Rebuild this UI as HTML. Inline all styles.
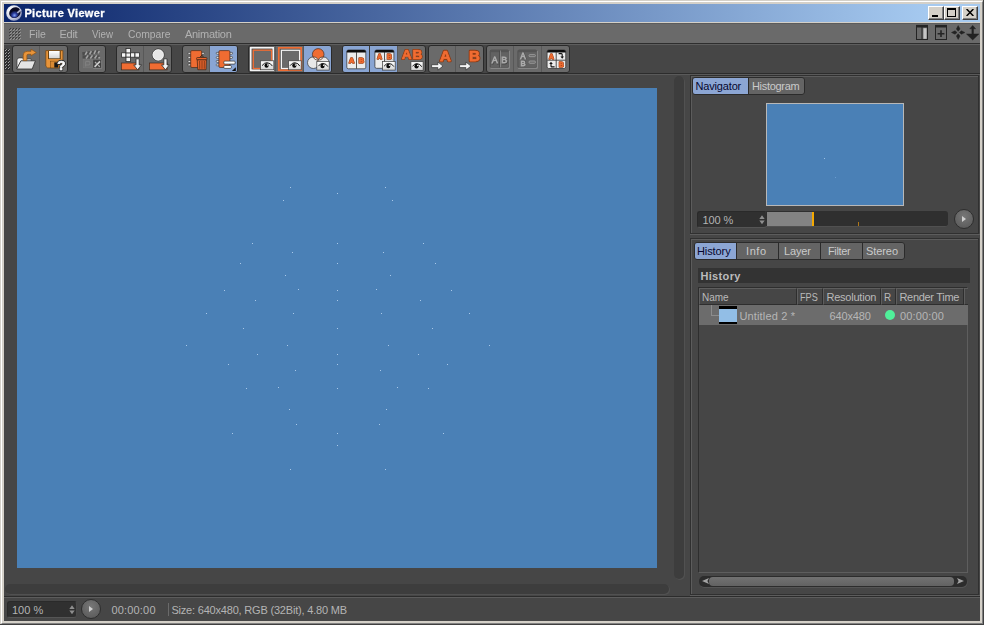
<!DOCTYPE html>
<html>
<head>
<meta charset="utf-8">
<title>Picture Viewer</title>
<style>
html,body{margin:0;padding:0;background:#464646;}
body{width:984px;height:625px;overflow:hidden;position:relative;font-family:"Liberation Sans",sans-serif;font-size:11px;color:#b4b4b4;}
*{box-sizing:border-box;}
.a{position:absolute;}
.t{position:absolute;line-height:14px;white-space:nowrap;font-size:11px;}
#frame{left:0;top:0;width:984px;height:625px;background:#d4d0c8;}
#frame .hl{left:1px;top:1px;width:982px;height:623px;border-left:1px solid #fff;border-top:1px solid #fff;border-right:1px solid #808080;border-bottom:1px solid #808080;}
#frame .dk{left:0;top:0;width:984px;height:625px;border-right:1px solid #404040;border-bottom:1px solid #404040;}
#title{left:4px;top:4px;width:976px;height:18px;background:linear-gradient(to right,#0a246a 0,#a6caf0 95%);}
#title .txt{left:20px;top:2px;font-weight:bold;color:#fff;font-size:11px;line-height:14px;white-space:nowrap;}
.wb{top:2px;width:16px;height:14px;background:#d4d0c8;border-left:1px solid #fff;border-top:1px solid #fff;border-right:1px solid #404040;border-bottom:1px solid #404040;}
.wb:after{content:"";position:absolute;left:0;top:0;right:0;bottom:0;border-right:1px solid #808080;border-bottom:1px solid #808080;}
#menubar{left:4px;top:23px;width:976px;height:20px;background:#6a6a6a;border-top:1px solid #5c5c5c;}
#menubar span{position:absolute;top:3px;line-height:14px;color:#b0b0b0;white-space:nowrap;}
#client{left:4px;top:43px;width:976px;height:578px;background:#464646;}
.grp{top:45px;height:28px;background:#6a6a6a;border:1px solid #2a2a2a;border-radius:3px;}
.on{background:#89a5d3;}
.dv{background:#585858;}
.tabs{background:#2b2b2b;border-radius:4px;}
.tb{height:16px;background:#646464;}
.tb.on{background:#8ca6d4;}
.field{background:#303030;border-radius:3px;border:1px solid #2a2a2a;border-bottom-color:#555;border-right-color:#4a4a4a;color:#b4b4b4;line-height:15px;padding-left:5px;}
.hc{top:288px;height:17px;border-top:1px solid #5e5e5e;border-left:1px solid #5e5e5e;border-right:1px solid #2e2e2e;border-bottom:1px solid #2e2e2e;background:#464646;color:#b8b8b8;line-height:15px;padding-left:3px;white-space:nowrap;overflow:hidden;}
.rbtn{width:20px;height:20px;border-radius:10px;background:radial-gradient(circle at 50% 35%,#777 0%,#636363 60%,#555 100%);border:1px solid #2e2e2e;}
.rbtn:after{content:"";position:absolute;left:7px;top:5.5px;border-left:4px solid #d0d0d0;border-top:3.5px solid transparent;border-bottom:3.5px solid transparent;}
</style>
</head>
<body>
<svg width="0" height="0" style="position:absolute"><defs><linearGradient id="eyeg" x1="0" y1="0" x2="0" y2="1"><stop offset="0" stop-color="#ffffff"/><stop offset="1" stop-color="#d4d4d4"/></linearGradient></defs></svg>
<div class="a" id="frame"><div class="a hl"></div><div class="a dk"></div></div>

<!-- TITLE BAR -->
<div class="a" id="title">
  <svg class="a" style="left:1px;top:0px" width="18" height="18" viewBox="0 0 18 18">
    <defs>
      <radialGradient id="lg1" cx="0.3" cy="0.3" r="0.9"><stop offset="0" stop-color="#ffffff"/><stop offset="0.55" stop-color="#d4d8e8"/><stop offset="1" stop-color="#7078a8"/></radialGradient>
      <radialGradient id="lg2" cx="0.38" cy="0.68" r="0.55"><stop offset="0" stop-color="#86a4f4"/><stop offset="0.45" stop-color="#2c3ea0"/><stop offset="1" stop-color="#080820"/></radialGradient>
    </defs>
    <circle cx="9" cy="9" r="7.8" fill="url(#lg1)"/>
    <ellipse cx="9.9" cy="8.7" rx="5.9" ry="5.2" transform="rotate(-32 9.9 8.7)" fill="#0a0a26"/>
    <ellipse cx="9.6" cy="9.4" rx="4.7" ry="4.3" transform="rotate(-32 9.6 9.4)" fill="url(#lg2)"/>
    <path d="M15.8 4.6 L11.6 8.6 L13 9.6 L16.6 6.4 Z" fill="#c4c8e0" opacity="0.85"/>
  </svg>
  
  <div class="a wb" style="left:924px"><div class="a" style="left:3px;top:8px;width:6px;height:2px;background:#000"></div></div>
  <div class="a wb" style="left:940px"><div class="a" style="left:2px;top:1px;width:9px;height:9px;border:1px solid #000;border-top-width:2px"></div></div>
  <div class="a wb" style="left:958px">
    <svg class="a" style="left:3px;top:2px" width="8" height="7" viewBox="0 0 8 7"><path d="M0.6 0 L7.4 7 M7.4 0 L0.6 7" stroke="#000" stroke-width="1.5" fill="none"/></svg>
  </div>
</div>

<!-- MENU BAR -->
<div class="a" id="menubar">
  <svg class="a" style="left:5px;top:4px" width="12" height="12" viewBox="0 0 12 12" shape-rendering="crispEdges"><rect x="1" y="0" width="1" height="1" fill="#3e3e3e"/><rect x="0" y="1" width="1" height="1" fill="#3e3e3e"/><rect x="2" y="1" width="1" height="1" fill="#949494"/><rect x="1" y="2" width="1" height="1" fill="#949494"/><rect x="4" y="0" width="1" height="1" fill="#3e3e3e"/><rect x="3" y="1" width="1" height="1" fill="#3e3e3e"/><rect x="5" y="1" width="1" height="1" fill="#949494"/><rect x="4" y="2" width="1" height="1" fill="#949494"/><rect x="7" y="0" width="1" height="1" fill="#3e3e3e"/><rect x="6" y="1" width="1" height="1" fill="#3e3e3e"/><rect x="8" y="1" width="1" height="1" fill="#949494"/><rect x="7" y="2" width="1" height="1" fill="#949494"/><rect x="10" y="0" width="1" height="1" fill="#3e3e3e"/><rect x="9" y="1" width="1" height="1" fill="#3e3e3e"/><rect x="11" y="1" width="1" height="1" fill="#949494"/><rect x="10" y="2" width="1" height="1" fill="#949494"/><rect x="1" y="3" width="1" height="1" fill="#3e3e3e"/><rect x="0" y="4" width="1" height="1" fill="#3e3e3e"/><rect x="2" y="4" width="1" height="1" fill="#949494"/><rect x="1" y="5" width="1" height="1" fill="#949494"/><rect x="4" y="3" width="1" height="1" fill="#3e3e3e"/><rect x="3" y="4" width="1" height="1" fill="#3e3e3e"/><rect x="5" y="4" width="1" height="1" fill="#949494"/><rect x="4" y="5" width="1" height="1" fill="#949494"/><rect x="7" y="3" width="1" height="1" fill="#3e3e3e"/><rect x="6" y="4" width="1" height="1" fill="#3e3e3e"/><rect x="8" y="4" width="1" height="1" fill="#949494"/><rect x="7" y="5" width="1" height="1" fill="#949494"/><rect x="10" y="3" width="1" height="1" fill="#3e3e3e"/><rect x="9" y="4" width="1" height="1" fill="#3e3e3e"/><rect x="11" y="4" width="1" height="1" fill="#949494"/><rect x="10" y="5" width="1" height="1" fill="#949494"/><rect x="1" y="6" width="1" height="1" fill="#3e3e3e"/><rect x="0" y="7" width="1" height="1" fill="#3e3e3e"/><rect x="2" y="7" width="1" height="1" fill="#949494"/><rect x="1" y="8" width="1" height="1" fill="#949494"/><rect x="4" y="6" width="1" height="1" fill="#3e3e3e"/><rect x="3" y="7" width="1" height="1" fill="#3e3e3e"/><rect x="5" y="7" width="1" height="1" fill="#949494"/><rect x="4" y="8" width="1" height="1" fill="#949494"/><rect x="7" y="6" width="1" height="1" fill="#3e3e3e"/><rect x="6" y="7" width="1" height="1" fill="#3e3e3e"/><rect x="8" y="7" width="1" height="1" fill="#949494"/><rect x="7" y="8" width="1" height="1" fill="#949494"/><rect x="10" y="6" width="1" height="1" fill="#3e3e3e"/><rect x="9" y="7" width="1" height="1" fill="#3e3e3e"/><rect x="11" y="7" width="1" height="1" fill="#949494"/><rect x="10" y="8" width="1" height="1" fill="#949494"/><rect x="1" y="9" width="1" height="1" fill="#3e3e3e"/><rect x="0" y="10" width="1" height="1" fill="#3e3e3e"/><rect x="2" y="10" width="1" height="1" fill="#949494"/><rect x="1" y="11" width="1" height="1" fill="#949494"/><rect x="4" y="9" width="1" height="1" fill="#3e3e3e"/><rect x="3" y="10" width="1" height="1" fill="#3e3e3e"/><rect x="5" y="10" width="1" height="1" fill="#949494"/><rect x="4" y="11" width="1" height="1" fill="#949494"/><rect x="7" y="9" width="1" height="1" fill="#3e3e3e"/><rect x="6" y="10" width="1" height="1" fill="#3e3e3e"/><rect x="8" y="10" width="1" height="1" fill="#949494"/><rect x="7" y="11" width="1" height="1" fill="#949494"/><rect x="10" y="9" width="1" height="1" fill="#3e3e3e"/><rect x="9" y="10" width="1" height="1" fill="#3e3e3e"/><rect x="11" y="10" width="1" height="1" fill="#949494"/><rect x="10" y="11" width="1" height="1" fill="#949494"/></svg>
</div>

<svg class="a" style="left:912px;top:24px" width="68" height="18" viewBox="912 24 68 18">
<g fill="none" stroke="#242424">
<rect x="916.5" y="26.5" width="11" height="13" stroke-width="1"/>
<path d="M916 26.2 L928 26.2" stroke-width="2.6"/>
<path d="M922 27 L922 39" stroke-width="1"/>
<rect x="935.5" y="26.5" width="11" height="13" stroke-width="1"/>
<path d="M935 26.2 L947 26.2" stroke-width="2.6"/>
<path d="M937.6 33.7 L944.4 33.7 M941 30.3 L941 37.1" stroke-width="1.6"/>
</g>
<rect x="923.4" y="28.2" width="3.2" height="10.6" fill="#c6c6c6"/>
<g fill="#222" stroke="#222" stroke-width="0.5">
<path d="M958.2 25.6 L960 29 L958.2 31.2 L956.4 29 Z"/>
<path d="M958.2 39.4 L960 36 L958.2 33.8 L956.4 36 Z"/>
<path d="M951.5 32.5 L955 30.8 L957 32.5 L955 34.2 Z"/>
<path d="M964.9 32.5 L961.4 30.8 L959.4 32.5 L961.4 34.2 Z"/>
<path d="M972.7 25.4 L975.6 28.8 L973.5 28.8 L973.5 34 L978.9 34 L972.7 39.9 L966.5 34 L971.9 34 L971.9 28.8 L969.8 28.8 Z"/>
</g>
</svg>

<!-- CLIENT -->
<div class="a" id="client"></div>
<div class="a" style="left:4px;top:43px;width:976px;height:1px;background:#2e2e2e"></div>
<div class="a" style="left:4px;top:44px;width:976px;height:1px;background:#5e5e5e"></div>
<div class="a" style="left:4px;top:73px;width:976px;height:1px;background:#2c2c2c"></div>
<div class="a" style="left:4px;top:74px;width:976px;height:1px;background:#5a5a5a"></div>

<!-- TOOLBAR -->
<div id="toolbar">
<svg class="a" style="left:4px;top:49px" width="6" height="21" viewBox="0 0 6 21" shape-rendering="crispEdges"><!--GRIP--><rect x="0" y="0" width="6" height="21" fill="#2e2e2e"/><rect x="2" y="0" width="1" height="1" fill="#8c8c8c"/><rect x="5" y="0" width="1" height="1" fill="#8c8c8c"/><rect x="1" y="1" width="1" height="1" fill="#a8a8a8"/><rect x="4" y="1" width="1" height="1" fill="#a8a8a8"/><rect x="0" y="2" width="1" height="1" fill="#363636"/><rect x="3" y="2" width="1" height="1" fill="#363636"/><rect x="2" y="3" width="1" height="1" fill="#8c8c8c"/><rect x="5" y="3" width="1" height="1" fill="#8c8c8c"/><rect x="1" y="4" width="1" height="1" fill="#a8a8a8"/><rect x="4" y="4" width="1" height="1" fill="#a8a8a8"/><rect x="0" y="5" width="1" height="1" fill="#363636"/><rect x="3" y="5" width="1" height="1" fill="#363636"/><rect x="2" y="6" width="1" height="1" fill="#8c8c8c"/><rect x="5" y="6" width="1" height="1" fill="#8c8c8c"/><rect x="1" y="7" width="1" height="1" fill="#a8a8a8"/><rect x="4" y="7" width="1" height="1" fill="#a8a8a8"/><rect x="0" y="8" width="1" height="1" fill="#363636"/><rect x="3" y="8" width="1" height="1" fill="#363636"/><rect x="2" y="9" width="1" height="1" fill="#8c8c8c"/><rect x="5" y="9" width="1" height="1" fill="#8c8c8c"/><rect x="1" y="10" width="1" height="1" fill="#a8a8a8"/><rect x="4" y="10" width="1" height="1" fill="#a8a8a8"/><rect x="0" y="11" width="1" height="1" fill="#363636"/><rect x="3" y="11" width="1" height="1" fill="#363636"/><rect x="2" y="12" width="1" height="1" fill="#8c8c8c"/><rect x="5" y="12" width="1" height="1" fill="#8c8c8c"/><rect x="1" y="13" width="1" height="1" fill="#a8a8a8"/><rect x="4" y="13" width="1" height="1" fill="#a8a8a8"/><rect x="0" y="14" width="1" height="1" fill="#363636"/><rect x="3" y="14" width="1" height="1" fill="#363636"/><rect x="2" y="15" width="1" height="1" fill="#8c8c8c"/><rect x="5" y="15" width="1" height="1" fill="#8c8c8c"/><rect x="1" y="16" width="1" height="1" fill="#a8a8a8"/><rect x="4" y="16" width="1" height="1" fill="#a8a8a8"/><rect x="0" y="17" width="1" height="1" fill="#363636"/><rect x="3" y="17" width="1" height="1" fill="#363636"/><rect x="2" y="18" width="1" height="1" fill="#8c8c8c"/><rect x="5" y="18" width="1" height="1" fill="#8c8c8c"/><rect x="1" y="19" width="1" height="1" fill="#a8a8a8"/><rect x="4" y="19" width="1" height="1" fill="#a8a8a8"/><rect x="0" y="20" width="1" height="1" fill="#363636"/><rect x="3" y="20" width="1" height="1" fill="#363636"/><!--/GRIP--></svg>
<div class="a grp" style="left:12px;width:56px"></div>
<div class="a dv" style="left:39px;top:46px;width:1px;height:26px"></div>
<div class="a grp" style="left:78px;width:28px"></div>
<div class="a grp" style="left:116px;width:56px"></div>
<div class="a dv" style="left:143px;top:46px;width:1px;height:26px"></div>
<div class="a grp" style="left:182px;width:56px"></div>
<div class="a dv" style="left:209px;top:46px;width:1px;height:26px"></div>
<div class="a on" style="left:210px;top:46px;width:27px;height:26px;border-radius:0 2px 2px 0"></div>
<div class="a grp" style="left:248px;width:84px"></div>
<div class="a dv" style="left:275px;top:46px;width:1px;height:26px"></div>
<div class="a dv" style="left:303px;top:46px;width:1px;height:26px"></div>
<div class="a on" style="left:304px;top:46px;width:27px;height:26px;border-radius:0 2px 2px 0"></div>
<div class="a grp" style="left:342px;width:84px"></div>
<div class="a on" style="left:343px;top:46px;width:26px;height:26px;border-radius:2px 0 0 2px"></div>
<div class="a dv" style="left:369px;top:46px;width:1px;height:26px;background:#3a3a3a"></div>
<div class="a on" style="left:370px;top:46px;width:27px;height:26px;border-radius:0"></div>
<div class="a dv" style="left:397px;top:46px;width:1px;height:26px"></div>
<div class="a grp" style="left:428px;width:56px"></div>
<div class="a dv" style="left:455px;top:46px;width:1px;height:26px"></div>
<div class="a grp" style="left:486px;width:84px"></div>
<div class="a dv" style="left:513px;top:46px;width:1px;height:26px"></div>
<div class="a dv" style="left:541px;top:46px;width:1px;height:26px"></div>
<svg class="a" style="left:0;top:44px;will-change:transform" width="600" height="32" viewBox="0 44 600 32">
<g id="ic1"><!--IC1--><path d="M17 68.6 L17 59.4 L18.8 57.9 L22.6 57.9 L23.4 59 L31.2 59 L31.2 61.2 L21 61.2 Z" fill="#f4f4f4" stroke="#333" stroke-width="0.7"/><path d="M20.9 60.8 L35.4 60.8 L32.2 69 L16.7 69 Z" fill="#e4e4e4" stroke="#2c2c2c" stroke-width="0.8" stroke-linejoin="round"/><path d="M23.2 60.6 L23.2 55.2 Q23.2 51.3 27.2 51.3 L31 51.3 L31 49.2 L36.4 52.5 L31 55.7 L31 54.3 L28.2 54.3 Q26.9 54.3 26.9 55.6 L26.9 60.6 Z" fill="#e8943a" stroke="#8a5216" stroke-width="0.7" stroke-linejoin="round"/><!--/IC1--></g>
<g id="ic2"><!--IC2--><path d="M45.8 50.6 L62.9 50.6 L62.9 67.9 L47.6 67.9 L45.8 66.2 Z" fill="#e8943a" stroke="#6e4210" stroke-width="0.7" stroke-linejoin="round"/><rect x="48.1" y="50.9" width="12.6" height="8.2" fill="#5a3a10"/><rect x="49" y="51" width="10.7" height="7.3" fill="url(#eyeg)"/><rect x="50.5" y="61.1" width="8" height="6.8" fill="#d88a34" stroke="#6e4210" stroke-width="0.5"/><rect x="54.3" y="62.4" width="3.7" height="5.1" fill="#141414"/><text x="57.3" y="69.7" font-family="Liberation Sans, sans-serif" font-weight="bold" font-size="13.4" fill="#2a2a2a" stroke="#2a2a2a" stroke-width="2.3" stroke-linejoin="round" >?</text><text x="57.3" y="69.7" font-family="Liberation Sans, sans-serif" font-weight="bold" font-size="13.4" fill="#fafafa" stroke="#fafafa" stroke-width="0.7" stroke-linejoin="round" >?</text><!--/IC2--></g>
<g id="ic3"><!--IC3--><g><rect x="83.6" y="59.4" width="9" height="8.4" fill="#707070" stroke="#7a7a7a" stroke-width="0.6"/><path d="M85.6 61.4 L85.6 66.6 M85.6 61.4 L88.2 61.4 Q90 61.4 90 63.2 Q90 65 88.2 65 L85.6 65" fill="none" stroke="#808080" stroke-width="1.1"/><g transform="rotate(-7.4 82.5 55)"><rect x="82.5" y="52.2" width="17.2" height="3.1" fill="#4c4c4c"/><path d="M85.2 55.3 L87.4 52.2 M89.6 55.3 L91.8 52.2 M94 55.3 L96.2 52.2 M98.2 55.3 L99.7 53.2" stroke="#a4a4a4" stroke-width="1.6"/></g><rect x="82.5" y="55.4" width="17.2" height="3.1" fill="#4c4c4c"/><path d="M86 58.5 L88.2 55.4 M90.3 58.5 L92.5 55.4 M94.6 58.5 L96.8 55.4 M98.6 58.5 L99.7 57" stroke="#a4a4a4" stroke-width="1.6"/><rect x="93.2" y="60.2" width="8.2" height="7.8" fill="#3e3e3e"/><path d="M93.2 68.3 L101.7 68.3 L101.7 60.2" fill="none" stroke="#8c8c8c" stroke-width="0.7"/><path d="M94.6 66.8 L100 61.4" stroke="#cccccc" stroke-width="1.7"/><path d="M95 62 L96.6 63.6 M98.2 65.2 L99.8 66.8" stroke="#b0b0b0" stroke-width="1.3"/></g><!--/IC3--></g>
<g id="ic4"><!--IC4--><rect x="121.3" y="63" width="17.6" height="6.9" fill="#f06c32" stroke="#3a2a20" stroke-width="0.7"/><rect x="121.6" y="52.8" width="4.4" height="4.4" fill="#f4f4f4" stroke="#2c2c2c" stroke-width="0.8"/><rect x="126.0" y="52.8" width="4.4" height="4.4" fill="#f4f4f4" stroke="#2c2c2c" stroke-width="0.8"/><rect x="130.5" y="52.8" width="4.4" height="4.4" fill="#f4f4f4" stroke="#2c2c2c" stroke-width="0.8"/><rect x="135.0" y="52.8" width="4.4" height="4.4" fill="#f4f4f4" stroke="#2c2c2c" stroke-width="0.8"/><rect x="126.0" y="48.5" width="4.4" height="4.4" fill="#f4f4f4" stroke="#2c2c2c" stroke-width="0.8"/><rect x="126.0" y="57.2" width="4.4" height="4.4" fill="#f4f4f4" stroke="#2c2c2c" stroke-width="0.8"/><path d="M136.0 58.8 L139.2 58.8 L139.2 64.9 L141.5 64.9 L137.6 69.8 L133.7 64.9 L136.0 64.9 Z" fill="#f4f4f4" stroke="#2a2a2a" stroke-width="0.8" stroke-linejoin="round"/><!--/IC4--></g>
<g id="ic5"><!--IC5--><rect x="149.4" y="63" width="17.7" height="6.9" fill="#f06c32" stroke="#3a2a20" stroke-width="0.7"/><circle cx="158.2" cy="54.9" r="6" fill="#e6e6e6" stroke="#2c2c2c" stroke-width="0.8"/><circle cx="158.2" cy="54.9" r="5.3" fill="none" stroke="#fafafa" stroke-width="0.6"/><path d="M163.8 58.8 L167.0 58.8 L167.0 64.9 L169.3 64.9 L165.4 69.8 L161.5 64.9 L163.8 64.9 Z" fill="#f4f4f4" stroke="#2a2a2a" stroke-width="0.8" stroke-linejoin="round"/><!--/IC5--></g>
<g id="ic6"><!--IC6--><rect x="188.1" y="52.4" width="3" height="1.8" rx="0.5" fill="#f4f4f4" stroke="#333" stroke-width="0.6"/><rect x="188.1" y="56.6" width="3" height="1.8" rx="0.5" fill="#f4f4f4" stroke="#333" stroke-width="0.6"/><rect x="188.1" y="60.5" width="3" height="1.8" rx="0.5" fill="#f4f4f4" stroke="#333" stroke-width="0.6"/><rect x="188.1" y="63.9" width="3" height="1.8" rx="0.5" fill="#f4f4f4" stroke="#333" stroke-width="0.6"/><rect x="201.29999999999998" y="52.4" width="3" height="1.8" rx="0.5" fill="#f4f4f4" stroke="#333" stroke-width="0.6"/><rect x="190.7" y="50.6" width="11.0" height="16.9" rx="1.2" fill="#f06c32" stroke="#4a2a18" stroke-width="0.7"/><path d="M199.6 57.6 L201.8 55.2 L204 57.6" fill="none" stroke="#3a2216" stroke-width="0.9"/><rect x="196.6" y="57.5" width="10.3" height="2.4" rx="0.8" fill="#e8642c" stroke="#3a2216" stroke-width="0.7"/><path d="M197.2 59.9 L206.4 59.9 L206 69.7 L197.8 69.7 Z" fill="#e8642c" stroke="#3a2216" stroke-width="0.7"/><path d="M199.7 61 L199.8 68.8 M202 61 L202 68.8 M204.3 61 L204.2 68.8" stroke="#7a3414" stroke-width="0.9"/><!--/IC6--></g>
<g id="ic7"><!--IC7--><rect x="216.3" y="52.4" width="3" height="1.8" rx="0.5" fill="#f4f4f4" stroke="#333" stroke-width="0.6"/><rect x="216.3" y="56.6" width="3" height="1.8" rx="0.5" fill="#f4f4f4" stroke="#333" stroke-width="0.6"/><rect x="216.3" y="60.5" width="3" height="1.8" rx="0.5" fill="#f4f4f4" stroke="#333" stroke-width="0.6"/><rect x="216.3" y="64.0" width="3" height="1.8" rx="0.5" fill="#f4f4f4" stroke="#333" stroke-width="0.6"/><rect x="229.5" y="52.4" width="3" height="1.8" rx="0.5" fill="#f4f4f4" stroke="#333" stroke-width="0.6"/><rect x="229.5" y="56.6" width="3" height="1.8" rx="0.5" fill="#f4f4f4" stroke="#333" stroke-width="0.6"/><rect x="218.9" y="50.6" width="11.0" height="16.9" rx="1.2" fill="#f06c32" stroke="#4a2a18" stroke-width="0.7"/><rect x="223.8" y="61.1" width="11.4" height="3" rx="1" fill="#ffffff" stroke="#2c2c2c" stroke-width="0.7"/><rect x="223.8" y="65.5" width="7.6" height="2.9" rx="1" fill="#ffffff" stroke="#2c2c2c" stroke-width="0.7"/><path d="M235.8 67.2 L235.8 71.1 L231.9 71.1 Z" fill="#0a0a0a"/><!--/IC7--></g>
<g id="ic8"><!--IC8--><rect x="250.8" y="47.8" width="22.4" height="22.4" fill="#6a6a6a" stroke="#f4f4f4" stroke-width="1.6"/><rect x="252.2" y="49.2" width="19.6" height="19.6" fill="none" stroke="#505050" stroke-width="0.7"/><rect x="253.3" y="50.2" width="18.3" height="18.3" fill="none" stroke="#f06c32" stroke-width="1.3"/><rect x="260.4" y="60.8" width="13.4" height="9" fill="url(#eyeg)" stroke="#3a3a3a" stroke-width="0.7"/><path d="M262.0 65.67999999999999 Q264.41999999999996 62.5 266.96399999999994 62.699999999999996 Q270.852 63.0 272.4 66.07999999999998" fill="none" stroke="#111" stroke-width="0.95"/><ellipse cx="266.56399999999996" cy="65.47999999999999" rx="2.1" ry="2.3" fill="#0a0a0a"/><circle cx="267.664" cy="64.88" r="0.75" fill="#f4f4f4"/><!--/IC8--></g>
<g id="ic9"><!--IC9--><rect x="278.8" y="47.8" width="22.4" height="22.4" fill="#6a6a6a" stroke="#f06c32" stroke-width="1.7"/><rect x="280.3" y="49.3" width="19.4" height="19.4" fill="none" stroke="#505050" stroke-width="0.7"/><rect x="281.4" y="50.3" width="18.2" height="18.2" fill="none" stroke="#f4f4f4" stroke-width="1.2"/><rect x="288.5" y="60.8" width="12.7" height="9" fill="url(#eyeg)" stroke="#3a3a3a" stroke-width="0.7"/><path d="M290.1 65.67999999999999 Q292.31 62.5 294.74199999999996 62.699999999999996 Q298.406 63.0 299.8 66.07999999999998" fill="none" stroke="#111" stroke-width="0.95"/><ellipse cx="294.342" cy="65.47999999999999" rx="2.1" ry="2.3" fill="#0a0a0a"/><circle cx="295.442" cy="64.88" r="0.75" fill="#f4f4f4"/><!--/IC9--></g>
<g id="ic10"><!--IC10--><clipPath id="cO"><circle cx="318.2" cy="54.4" r="5.8"/></clipPath><circle cx="313.3" cy="62.7" r="5.8" fill="#e8e8e8" stroke="#333" stroke-width="0.7"/><circle cx="323.2" cy="62.7" r="5.8" fill="#e8e8e8" stroke="#333" stroke-width="0.7"/><circle cx="318.2" cy="54.4" r="5.8" fill="#f06c32"/><g clip-path="url(#cO)"><circle cx="313.3" cy="62.7" r="5.8" fill="#f6f6f6" stroke="#333" stroke-width="0.7"/><circle cx="323.2" cy="62.7" r="5.8" fill="#f6f6f6" stroke="#333" stroke-width="0.7"/></g><circle cx="318.2" cy="54.4" r="5.8" fill="none" stroke="#4a2a18" stroke-width="0.7"/><rect x="316.8" y="61.5" width="12.4" height="8.6" fill="url(#eyeg)" stroke="#3a3a3a" stroke-width="0.7"/><path d="M318.40000000000003 66.172 Q320.52000000000004 63.2 322.904 63.4 Q326.47200000000004 63.7 327.8 66.57199999999999" fill="none" stroke="#111" stroke-width="0.95"/><ellipse cx="322.504" cy="65.972" rx="2.1" ry="2.3" fill="#0a0a0a"/><circle cx="323.60400000000004" cy="65.372" r="0.75" fill="#f4f4f4"/><!--/IC10--></g>
<g id="ic11"><!--IC11--><rect x="346.8" y="50" width="19.0" height="18.799999999999997" rx="1.6" fill="#ececec" stroke="#2c2c2c" stroke-width="0.7"/><path d="M346.8 52.4 L346.8 51.6 Q346.8 50 348.40000000000003 50 L364.2 50 Q365.8 50 365.8 51.6 L365.8 52.4 Z" fill="#0c0c0c"/><path d="M356.5 52 L356.5 68.6" stroke="#2c2c2c" stroke-width="0.8"/><text x="349.1" y="62.9" font-family="Liberation Sans, sans-serif" font-weight="bold" font-size="7.2" fill="#8a3a14" stroke="#8a3a14" stroke-width="1.7" stroke-linejoin="round" >A</text><text x="349.1" y="62.9" font-family="Liberation Sans, sans-serif" font-weight="bold" font-size="7.2" fill="#f06c32" stroke="#f06c32" stroke-width="0.7" stroke-linejoin="round" >A</text><text x="358.8" y="62.9" font-family="Liberation Sans, sans-serif" font-weight="bold" font-size="7.2" fill="#8a3a14" stroke="#8a3a14" stroke-width="1.7" stroke-linejoin="round" >B</text><text x="358.8" y="62.9" font-family="Liberation Sans, sans-serif" font-weight="bold" font-size="7.2" fill="#f06c32" stroke="#f06c32" stroke-width="0.7" stroke-linejoin="round" >B</text><!--/IC11--></g>
<g id="ic12"><!--IC12--><rect x="374.9" y="50" width="19.0" height="18.299999999999997" rx="1.6" fill="#ececec" stroke="#2c2c2c" stroke-width="0.7"/><path d="M374.9 52.4 L374.9 51.6 Q374.9 50 376.5 50 L392.29999999999995 50 Q393.9 50 393.9 51.6 L393.9 52.4 Z" fill="#0c0c0c"/><path d="M384.5 52 L384.5 62" stroke="#2c2c2c" stroke-width="0.8"/><path d="M384.9 59.8 L393.5 59.8" stroke="#999" stroke-width="0.6"/><text x="377.3" y="58.9" font-family="Liberation Sans, sans-serif" font-weight="bold" font-size="6.4" fill="#8a3a14" stroke="#8a3a14" stroke-width="1.6" stroke-linejoin="round" >A</text><text x="377.3" y="58.9" font-family="Liberation Sans, sans-serif" font-weight="bold" font-size="6.4" fill="#f06c32" stroke="#f06c32" stroke-width="0.6" stroke-linejoin="round" >A</text><text x="386.9" y="58.9" font-family="Liberation Sans, sans-serif" font-weight="bold" font-size="6.4" fill="#8a3a14" stroke="#8a3a14" stroke-width="1.6" stroke-linejoin="round" >B</text><text x="386.9" y="58.9" font-family="Liberation Sans, sans-serif" font-weight="bold" font-size="6.4" fill="#f06c32" stroke="#f06c32" stroke-width="0.6" stroke-linejoin="round" >B</text><rect x="382.5" y="61.5" width="12.7" height="8.6" fill="url(#eyeg)" stroke="#3a3a3a" stroke-width="0.7"/><path d="M384.1 66.172 Q386.31 63.2 388.74199999999996 63.4 Q392.406 63.7 393.8 66.57199999999999" fill="none" stroke="#111" stroke-width="0.95"/><ellipse cx="388.342" cy="65.972" rx="2.1" ry="2.3" fill="#0a0a0a"/><circle cx="389.442" cy="65.372" r="0.75" fill="#f4f4f4"/><!--/IC12--></g>
<g id="ic13"><!--IC13--><text x="401.8" y="58.6" font-family="Liberation Sans, sans-serif" font-weight="bold" font-size="13.6" fill="#8a3a14" stroke="#8a3a14" stroke-width="2.08" stroke-linejoin="round" >A</text><text x="401.8" y="58.6" font-family="Liberation Sans, sans-serif" font-weight="bold" font-size="13.6" fill="#f06c32" stroke="#f06c32" stroke-width="0.68" stroke-linejoin="round" >A</text><text x="412.6" y="58.6" font-family="Liberation Sans, sans-serif" font-weight="bold" font-size="13.6" fill="#8a3a14" stroke="#8a3a14" stroke-width="2.08" stroke-linejoin="round" >B</text><text x="412.6" y="58.6" font-family="Liberation Sans, sans-serif" font-weight="bold" font-size="13.6" fill="#f06c32" stroke="#f06c32" stroke-width="0.68" stroke-linejoin="round" >B</text><rect x="410.9" y="61.7" width="12.2" height="8.6" fill="url(#eyeg)" stroke="#3a3a3a" stroke-width="0.7"/><path d="M412.5 66.372 Q414.56 63.400000000000006 416.912 63.6 Q420.416 63.900000000000006 421.7 66.77199999999999" fill="none" stroke="#111" stroke-width="0.95"/><ellipse cx="416.512" cy="66.172" rx="2.1" ry="2.3" fill="#0a0a0a"/><circle cx="417.612" cy="65.572" r="0.75" fill="#f4f4f4"/><!--/IC13--></g>
<g id="ic14"><!--IC14--><text x="439.9" y="60.8" font-family="Liberation Sans, sans-serif" font-weight="bold" font-size="15" fill="#8a3a14" stroke="#8a3a14" stroke-width="2.55" stroke-linejoin="round" >A</text><text x="439.9" y="60.8" font-family="Liberation Sans, sans-serif" font-weight="bold" font-size="15" fill="#f06c32" stroke="#f06c32" stroke-width="0.75" stroke-linejoin="round" >A</text><path d="M431.6 64.7 L437.90000000000003 64.7 L437.90000000000003 62 L443.0 66.1 L437.90000000000003 70.1 L437.90000000000003 67.6 L431.6 67.6 Z" fill="#f4f4f4" stroke="#333" stroke-width="0.7" stroke-linejoin="round"/><!--/IC14--></g>
<g id="ic15"><!--IC15--><text x="469" y="60.8" font-family="Liberation Sans, sans-serif" font-weight="bold" font-size="15" fill="#8a3a14" stroke="#8a3a14" stroke-width="2.55" stroke-linejoin="round" >B</text><text x="469" y="60.8" font-family="Liberation Sans, sans-serif" font-weight="bold" font-size="15" fill="#f06c32" stroke="#f06c32" stroke-width="0.75" stroke-linejoin="round" >B</text><path d="M459.6 64.7 L465.90000000000003 64.7 L465.90000000000003 62 L471.0 66.1 L465.90000000000003 70.1 L465.90000000000003 67.6 L459.6 67.6 Z" fill="#f4f4f4" stroke="#333" stroke-width="0.7" stroke-linejoin="round"/><!--/IC15--></g>
<g id="ic16"><!--IC16--><rect x="490.2" y="50" width="18.400000000000034" height="17.599999999999994" rx="1.5" fill="#626262" stroke="#4c4c4c" stroke-width="0.8"/><path d="M490.5 68.3 L509.3 68.3 L509.3 51" fill="none" stroke="#949494" stroke-width="0.9"/><rect x="490.2" y="50" width="18.400000000000034" height="2.2" fill="#545454"/><path d="M500.3 50.5 L500.3 67.4" stroke="#9a9a9a" stroke-width="0.8"/><path d="M499.5 50.5 L499.5 67.4" stroke="#444" stroke-width="0.8"/><text x="492.2" y="63.8" font-family="Liberation Sans, sans-serif" font-size="9" fill="none" stroke="#484848" stroke-width="0.9">A</text><text x="491.7" y="63.3" font-family="Liberation Sans, sans-serif" font-size="9" fill="#686868" stroke="#ababab" stroke-width="0.8">A</text><text x="501.8" y="63.8" font-family="Liberation Sans, sans-serif" font-size="9" fill="none" stroke="#484848" stroke-width="0.9">B</text><text x="501.3" y="63.3" font-family="Liberation Sans, sans-serif" font-size="9" fill="#686868" stroke="#ababab" stroke-width="0.8">B</text><!--/IC16--></g>
<g id="ic17"><!--IC17--><rect x="517.9" y="50" width="18.700000000000045" height="17.599999999999994" rx="1.5" fill="#626262" stroke="#4c4c4c" stroke-width="0.8"/><path d="M518.1999999999999 68.3 L537.3000000000001 68.3 L537.3000000000001 51" fill="none" stroke="#949494" stroke-width="0.9"/><rect x="517.9" y="50" width="18.700000000000045" height="2.2" fill="#545454"/><text x="520.7" y="59.2" font-family="Liberation Sans, sans-serif" font-size="8.2" fill="none" stroke="#484848" stroke-width="0.9">A</text><text x="520.2" y="58.7" font-family="Liberation Sans, sans-serif" font-size="8.2" fill="#686868" stroke="#ababab" stroke-width="0.8">A</text><text x="521.0" y="66.2" font-family="Liberation Sans, sans-serif" font-size="7.8" fill="none" stroke="#484848" stroke-width="0.9">B</text><text x="520.5" y="65.7" font-family="Liberation Sans, sans-serif" font-size="7.8" fill="#686868" stroke="#ababab" stroke-width="0.8">B</text><rect x="529" y="54.6" width="6.4" height="2.1" rx="1" fill="#6a6a6a" stroke="#ababab" stroke-width="0.7"/><rect x="529" y="61" width="6.4" height="2.3" rx="1" fill="#6a6a6a" stroke="#ababab" stroke-width="0.7"/><!--/IC17--></g>
<g id="ic18"><!--IC18--><rect x="547.1" y="50" width="18.600000000000023" height="18.5" rx="1.6" fill="#ececec" stroke="#2c2c2c" stroke-width="0.7"/><path d="M547.1 52.4 L547.1 51.6 Q547.1 50 548.7 50 L564.1 50 Q565.7 50 565.7 51.6 L565.7 52.4 Z" fill="#0c0c0c"/><path d="M556.2 52 L556.2 68.3 M547.3 60.2 L565.5 60.2" stroke="#3a3a3a" stroke-width="0.9"/><text x="549.1" y="58.6" font-family="Liberation Sans, sans-serif" font-weight="bold" font-size="6.6" fill="#8a3a14" stroke="#8a3a14" stroke-width="1.5" stroke-linejoin="round" >A</text><text x="549.1" y="58.6" font-family="Liberation Sans, sans-serif" font-weight="bold" font-size="6.6" fill="#f06c32" stroke="#f06c32" stroke-width="0.6" stroke-linejoin="round" >A</text><text x="558.9" y="67.1" font-family="Liberation Sans, sans-serif" font-weight="bold" font-size="6.4" fill="#8a3a14" stroke="#8a3a14" stroke-width="1.5" stroke-linejoin="round" >B</text><text x="558.9" y="67.1" font-family="Liberation Sans, sans-serif" font-weight="bold" font-size="6.4" fill="#f06c32" stroke="#f06c32" stroke-width="0.6" stroke-linejoin="round" >B</text><path d="M558.6 53.6 L561.4 53.6 Q562.2 53.6 562.2 54.6 L562.2 57" fill="none" stroke="#111" stroke-width="1.1"/><path d="M560.4 56.6 L564 56.6 L562.2 58.8 Z" fill="#111"/><path d="M554.6 66.9 L551.8 66.9 Q551 66.9 551 65.9 L551 63.6" fill="none" stroke="#111" stroke-width="1.1"/><path d="M549.2 64 L552.8 64 L551 61.8 Z" fill="#111"/><!--/IC18--></g>
</svg>
</div>

<!-- MAIN IMAGE -->
<div class="a" id="pic" style="left:17px;top:88px;width:640px;height:480px;background:#4a80b6"></div>
<div class="a" id="dots" style="left:0;top:0;width:1px;height:1px;box-shadow:290px 187px 0 0 #a9c8e8,385px 187px 0 0 #a9c8e8,337px 193px 0 0 #a9c8e8,283px 200px 0 0 #a9c8e8,392px 200px 0 0 #a9c8e8,252px 243px 0 0 #a9c8e8,337px 243px 0 0 #a9c8e8,423px 243px 0 0 #a9c8e8,292px 252px 0 0 #a9c8e8,383px 252px 0 0 #a9c8e8,240px 263px 0 0 #a9c8e8,337px 263px 0 0 #a9c8e8,435px 263px 0 0 #a9c8e8,285px 275px 0 0 #a9c8e8,390px 275px 0 0 #a9c8e8,224px 290px 0 0 #a9c8e8,298px 289px 0 0 #a9c8e8,337px 290px 0 0 #a9c8e8,376px 289px 0 0 #a9c8e8,451px 290px 0 0 #a9c8e8,255px 300px 0 0 #a9c8e8,337px 300px 0 0 #a9c8e8,420px 300px 0 0 #a9c8e8,206px 313px 0 0 #a9c8e8,293px 313px 0 0 #a9c8e8,381px 313px 0 0 #a9c8e8,469px 313px 0 0 #a9c8e8,243px 328px 0 0 #a9c8e8,337px 328px 0 0 #a9c8e8,432px 328px 0 0 #a9c8e8,186px 345px 0 0 #a9c8e8,287px 345px 0 0 #a9c8e8,388px 345px 0 0 #a9c8e8,489px 345px 0 0 #a9c8e8,257px 354px 0 0 #a9c8e8,337px 354px 0 0 #a9c8e8,418px 354px 0 0 #a9c8e8,228px 364px 0 0 #a9c8e8,337px 364px 0 0 #a9c8e8,447px 364px 0 0 #a9c8e8,295px 370px 0 0 #a9c8e8,380px 370px 0 0 #a9c8e8,246px 388px 0 0 #a9c8e8,278px 387px 0 0 #a9c8e8,337px 388px 0 0 #a9c8e8,397px 387px 0 0 #a9c8e8,428px 388px 0 0 #a9c8e8,289px 409px 0 0 #a9c8e8,386px 409px 0 0 #a9c8e8,296px 424px 0 0 #a9c8e8,379px 424px 0 0 #a9c8e8,232px 433px 0 0 #a9c8e8,337px 433px 0 0 #a9c8e8,443px 433px 0 0 #a9c8e8,337px 445px 0 0 #a9c8e8,290px 469px 0 0 #a9c8e8,385px 469px 0 0 #a9c8e8"></div>

<!-- scrollbars of viewer -->
<div class="a" style="left:674px;top:76px;width:10px;height:503px;border-radius:5px;background:#3d3d3d;box-shadow:1px 1px 0 #515151"></div>
<div class="a" style="left:5px;top:584px;width:664px;height:10px;border-radius:5px;background:#3d3d3d;box-shadow:1px 1px 0 #515151"></div>

<!-- RIGHT PANELS -->
<div class="a" style="left:690px;top:75px;width:289px;height:1px;background:#303030"></div>
<div class="a" style="left:691px;top:76px;width:287px;height:1px;background:#5c5c5c"></div>
<div class="a" style="left:690px;top:75px;width:1px;height:159px;background:#303030"></div>
<div class="a" style="left:691px;top:76px;width:1px;height:157px;background:#5c5c5c"></div>
<div class="a" style="left:978px;top:75px;width:1px;height:159px;background:#303030"></div>
<div class="a" style="left:690px;top:233px;width:289px;height:1px;background:#303030"></div>
<div class="a" style="left:690px;top:234px;width:290px;height:1px;background:#5c5c5c"></div>
<div class="a" style="left:690px;top:238px;width:289px;height:1px;background:#303030"></div>
<div class="a" style="left:691px;top:239px;width:287px;height:1px;background:#5c5c5c"></div>
<div class="a" style="left:690px;top:238px;width:1px;height:357px;background:#303030"></div>
<div class="a" style="left:691px;top:239px;width:1px;height:355px;background:#5c5c5c"></div>
<div class="a" style="left:978px;top:238px;width:1px;height:357px;background:#303030"></div>
<div class="a" style="left:690px;top:594px;width:289px;height:1px;background:#303030"></div>
<div class="a" style="left:690px;top:595px;width:290px;height:1px;background:#5c5c5c"></div>


<div class="a tabs" style="left:692px;top:77px;width:113px;height:18px"></div>
<div class="a tb on" style="left:693px;top:78px;width:55px;border-radius:2px 0 0 2px"></div>
<div class="a tb" style="left:749px;top:78px;width:55px;border-radius:0 2px 2px 0"></div>
<div class="a" style="left:766px;top:103px;width:138px;height:103px;border:1px solid #b8b8b8;background:#4a80b6"></div>

<div class="a" style="left:824px;top:158px;width:1px;height:1px;background:#9cc0e4"></div><div class="a" style="left:835px;top:177px;width:1px;height:1px;background:#6a9cd0"></div>
<div class="a field" style="left:697px;top:211px;width:70px;height:17px;"></div>
<div class="a" style="left:766px;top:211px;width:182px;height:16px;background:#2f2f2f;border-radius:0 3px 3px 0;border-bottom:1px solid #505050"></div>
<div class="a" style="left:767px;top:212px;width:45px;height:14px;background:#838383"></div>
<div class="a" style="left:811.5px;top:212px;width:2.5px;height:14px;background:#f4a800"></div>
<div class="a" style="left:858px;top:222px;width:1px;height:4px;background:#b07818"></div>
<div class="a rbtn" style="left:954px;top:209px"></div>

<svg class="a" style="left:759px;top:215px" width="6" height="10" viewBox="0 0 6 10"><path d="M0.3 4 L3 0.2 L5.7 4 Z M0.3 5.4 L3 9.2 L5.7 5.4 Z" fill="#8e8e8e"/></svg>
<!-- History panel -->

<div class="a tabs" style="left:694px;top:242px;width:211px;height:18px"></div>
<div class="a tb on" style="left:695px;top:243px;width:41px;border-radius:2px 0 0 2px"></div>
<div class="a tb" style="left:737px;top:243px;width:41px"></div>
<div class="a tb" style="left:779px;top:243px;width:41px"></div>
<div class="a tb" style="left:821px;top:243px;width:41px"></div>
<div class="a tb" style="left:863px;top:243px;width:41px;border-radius:0 2px 2px 0"></div>
<div class="a" style="left:698px;top:268px;width:272px;height:15px;background:#333;color:#b8b8b8;font-weight:bold;line-height:15px;padding-left:2px;"></div>

<div class="a" style="left:698px;top:287px;width:270px;height:286px;border:1px solid #2e2e2e;border-right-color:#5e5e5e;border-bottom-color:#5e5e5e"></div>
<div class="a hc" style="left:699px;width:98px"></div>
<div class="a hc" style="left:797px;width:26px"></div>
<div class="a hc" style="left:823px;width:58px"></div>
<div class="a hc" style="left:881px;width:15px"></div>
<div class="a hc" style="left:896px;width:68px"></div>
<div class="a hc" style="left:964px;width:4px;padding:0;border-right:none"></div>

<div class="a" style="left:699px;top:305px;width:269px;height:20px;background:#6c6c6c"></div>
<div class="a" style="left:711px;top:305px;width:1px;height:11px;background:#8c8c8c"></div>
<div class="a" style="left:711px;top:315px;width:8px;height:1px;background:#8c8c8c"></div>
<div class="a" style="left:719px;top:306px;width:18px;height:18px;background:#000"></div>
<div class="a" style="left:719px;top:309px;width:18px;height:13px;background:#92bee6"></div>
<div class="a" style="left:885px;top:310px;width:10px;height:10px;border-radius:5px;background:#50f09a"></div>

<div class="a" style="left:699px;top:576px;width:268px;height:11px;border-radius:5px;background:#2c2c2c;box-shadow:0.5px 1px 0 #545454"></div>
<div class="a" style="left:709px;top:577px;width:245px;height:9px;border-radius:4px;background:linear-gradient(#727272,#626262)"></div>
<svg class="a" style="left:702px;top:578px" width="7" height="6" viewBox="0 0 7 6"><path d="M0 3 L7 0 L5.4 3 L7 6 Z" fill="#a4a4a4"/></svg>
<svg class="a" style="left:957px;top:578px" width="7" height="6" viewBox="0 0 7 6"><path d="M7 3 L0 0 L1.6 3 L0 6 Z" fill="#a4a4a4"/></svg>

<!-- STATUS BAR -->
<div class="a" style="left:4px;top:596px;width:976px;height:1px;background:#2c2c2c"></div>
<div class="a" style="left:4px;top:597px;width:976px;height:1px;background:#5c5c5c"></div>
<div class="a field" style="left:7px;top:601px;width:70px;height:17px;"></div>
<div class="a rbtn" style="left:81px;top:599px"></div>
<div class="a" style="left:168px;top:603px;width:1px;height:13px;background:#6a6a6a"></div>

<svg class="a" style="left:69px;top:605px" width="6" height="10" viewBox="0 0 6 10"><path d="M0.3 4 L3 0.2 L5.7 4 Z M0.3 5.4 L3 9.2 L5.7 5.4 Z" fill="#8e8e8e"/></svg>
<!--TEXTS-->
<span class="t" id="t_title" style="left:24.40px;top:6px;color:#ffffff;letter-spacing:0.346px;font-weight:bold;-webkit-text-stroke:0.3px #fff;">Picture Viewer</span>
<span class="t" id="t_file" style="left:28.52px;top:27px;color:#b2b2b2;letter-spacing:0.000px;transform:scaleX(0.9521);transform-origin:0 0;">File</span>
<span class="t" id="t_edit" style="left:59.42px;top:27px;color:#b2b2b2;letter-spacing:-0.240px;">Edit</span>
<span class="t" id="t_view" style="left:91.90px;top:27px;color:#b2b2b2;letter-spacing:0.000px;transform:scaleX(0.8875);transform-origin:0 0;">View</span>
<span class="t" id="t_compare" style="left:127.88px;top:27px;color:#b2b2b2;letter-spacing:0.000px;transform:scaleX(0.9403);transform-origin:0 0;">Compare</span>
<span class="t" id="t_anim" style="left:184.90px;top:27px;color:#b2b2b2;letter-spacing:-0.248px;">Animation</span>
<span class="t" id="t_nav" style="left:695.44px;top:79px;color:#06062e;letter-spacing:-0.158px;">Navigator</span>
<span class="t" id="t_histo" style="left:751.90px;top:79px;color:#cacaca;letter-spacing:-0.292px;">Histogram</span>
<span class="t" id="t_zoom1" style="left:702.42px;top:213px;color:#b4b4b4;letter-spacing:-0.090px;">100 %</span>
<span class="t" id="t_history" style="left:696.98px;top:244px;color:#06062e;letter-spacing:-0.090px;">History</span>
<span class="t" id="t_info" style="left:746.00px;top:244px;color:#cacaca;letter-spacing:0.600px;">Info</span>
<span class="t" id="t_layer" style="left:783.96px;top:244px;color:#cacaca;letter-spacing:-0.135px;">Layer</span>
<span class="t" id="t_filter" style="left:827.96px;top:244px;color:#cacaca;letter-spacing:-0.324px;">Filter</span>
<span class="t" id="t_stereo" style="left:865.96px;top:244px;color:#cacaca;letter-spacing:-0.072px;">Stereo</span>
<span class="t" id="t_hhead" style="left:700.38px;top:269px;color:#bcbcbc;letter-spacing:0.360px;font-weight:bold;">History</span>
<span class="t" id="t_name" style="left:702.40px;top:290px;color:#bababa;letter-spacing:0.000px;transform:scaleX(0.9076);transform-origin:0 0;">Name</span>
<span class="t" id="t_fps" style="left:800.42px;top:290px;color:#bababa;letter-spacing:0.000px;transform:scaleX(0.8307);transform-origin:0 0;">FPS</span>
<span class="t" id="t_res" style="left:826.44px;top:290px;color:#bababa;letter-spacing:-0.220px;">Resolution</span>
<span class="t" id="t_r" style="left:884.36px;top:290px;color:#bababa;letter-spacing:0.000px;transform:scaleX(0.8967);transform-origin:0 0;">R</span>
<span class="t" id="t_rtime" style="left:899.40px;top:290px;color:#bababa;letter-spacing:-0.288px;">Render Time</span>
<span class="t" id="t_untitled" style="left:739.40px;top:309px;color:#b6b6b6;letter-spacing:0.164px;">Untitled 2 *</span>
<span class="t" id="t_640" style="left:829.42px;top:309px;color:#b6b6b6;letter-spacing:-0.120px;">640x480</span>
<span class="t" id="t_time1" style="left:899.90px;top:309px;color:#b6b6b6;letter-spacing:0.180px;">00:00:00</span>
<span class="t" id="t_zoom2" style="left:11.98px;top:603px;color:#b4b4b4;letter-spacing:-0.000px;">100 %</span>
<span class="t" id="t_time2" style="left:111.44px;top:603px;color:#b4b4b4;letter-spacing:0.180px;">00:00:00</span>
<span class="t" id="t_size" style="left:171.38px;top:603px;color:#b4b4b4;letter-spacing:-0.191px;">Size: 640x480, RGB (32Bit), 4.80 MB</span>
<!--/TEXTS-->
</body>
</html>
